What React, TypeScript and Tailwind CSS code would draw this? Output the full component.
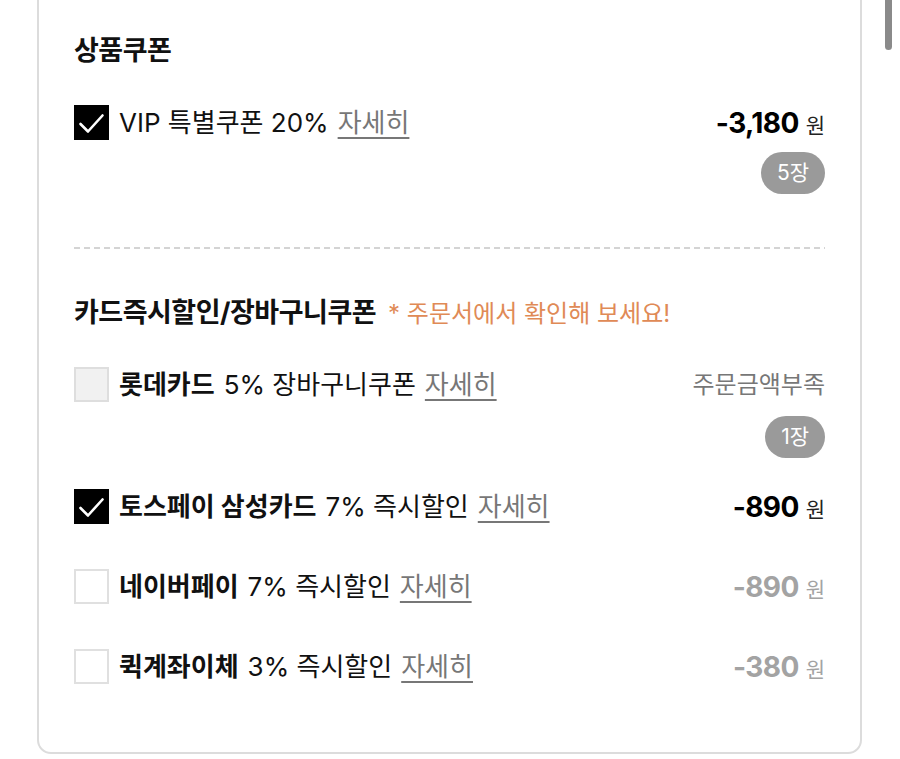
import React from "react";

const FONT = { fontFamily: 'Inter, "Noto Sans CJK KR", "Noto Sans", sans-serif' };

function Check({ state }: { state: "on" | "off" | "disabled" }) {
  if (state === "on") {
    return (
      <div className="w-[35px] h-[35px] bg-black shrink-0">
        <svg width="35" height="35" viewBox="0 0 35 35" fill="none">
          <path d="M6.5 19 L14 26.5 L28.5 10.5" stroke="white" strokeWidth="2.6" strokeLinecap="round" strokeLinejoin="round" />
        </svg>
      </div>
    );
  }
  if (state === "disabled") {
    return <div className="w-[35px] h-[35px] bg-[#f1f1f1] border-2 border-[#dedede] shrink-0" />;
  }
  return <div className="w-[35px] h-[35px] bg-white border-2 border-[#e0e0e0] shrink-0" />;
}

function Amount({ value, dim }: { value: string; dim?: boolean }) {
  return (
    <div className={`flex items-baseline gap-[7px] ${dim ? "text-[#a3a3a3]" : "text-black"}`}>
      <span className="text-[28px] font-bold tracking-[-0.6px]">{value}</span>
      <span className={`text-[21px] ${dim ? "text-[#a3a3a3]" : "text-[#222]"}`}>원</span>
    </div>
  );
}

function Detail() {
  return <span className="text-[#777] underline underline-offset-[5px] decoration-[1.5px] ml-[9px]">자세히</span>;
}

function Badge({ text }: { text: string }) {
  return (
    <div className="flex justify-end">
      <div className="h-[42px] px-[16px] rounded-full bg-[#9a9a9a] text-white text-[21px] flex items-center">{text}</div>
    </div>
  );
}

export default function App() {
  return (
    <div className="relative w-[900px] h-[759px] bg-white overflow-hidden" style={FONT}>
      <div className="absolute right-[8px] top-0 w-[7px] h-[50px] rounded-b-full bg-[#8a8a8a]" />
      <div className="ml-[37px] w-[825px] -mt-[31px] border-2 border-[#dcdcdc] rounded-[14px] pt-[63px] pb-[68px] px-[35px] text-[#111]">
        <div className="text-[27px] font-bold leading-[34px] tracking-[-0.5px]">상품쿠폰</div>

        <div className="mt-[37px] flex items-center justify-between h-[35px]">
          <div className="flex items-center text-[26px]">
            <Check state="on" />
            <span className="ml-[10px]">VIP 특별쿠폰 20%</span>
            <Detail />
          </div>
          <Amount value="-3,180" />
        </div>
        <div className="mt-[12px]">
          <Badge text="5장" />
        </div>

        <div className="mt-[53px] h-[2px] bg-[linear-gradient(to_right,#d4d4d4_6px,transparent_6px)] bg-[length:10px_2px]" />

        <div className="mt-[47px] flex items-baseline">
          <span className="text-[27px] font-bold leading-[34px] tracking-[-0.5px]">카드즉시할인/장바구니쿠폰</span>
          <span className="ml-[12px] text-[24px] text-[#e08a56]">* 주문서에서 확인해 보세요!</span>
        </div>

        <div className="mt-[35px] flex items-center justify-between h-[35px]">
          <div className="flex items-center text-[26px]">
            <Check state="disabled" />
            <span className="ml-[10px] font-bold">롯데카드</span>
            <span className="ml-[9px]">5% 장바구니쿠폰</span>
            <Detail />
          </div>
          <span className="text-[24px] text-[#777]">주문금액부족</span>
        </div>
        <div className="mt-[14px]">
          <Badge text="1장" />
        </div>

        <div className="mt-[31px] flex items-center justify-between h-[35px]">
          <div className="flex items-center text-[26px]">
            <Check state="on" />
            <span className="ml-[10px] font-bold">토스페이 삼성카드</span>
            <span className="ml-[9px]">7% 즉시할인</span>
            <Detail />
          </div>
          <Amount value="-890" />
        </div>

        <div className="mt-[45px] flex items-center justify-between h-[35px]">
          <div className="flex items-center text-[26px]">
            <Check state="off" />
            <span className="ml-[10px] font-bold">네이버페이</span>
            <span className="ml-[9px]">7% 즉시할인</span>
            <Detail />
          </div>
          <Amount value="-890" dim />
        </div>

        <div className="mt-[45px] flex items-center justify-between h-[35px]">
          <div className="flex items-center text-[26px]">
            <Check state="off" />
            <span className="ml-[10px] font-bold">퀵계좌이체</span>
            <span className="ml-[9px]">3% 즉시할인</span>
            <Detail />
          </div>
          <Amount value="-380" dim />
        </div>
      </div>
    </div>
  );
}
